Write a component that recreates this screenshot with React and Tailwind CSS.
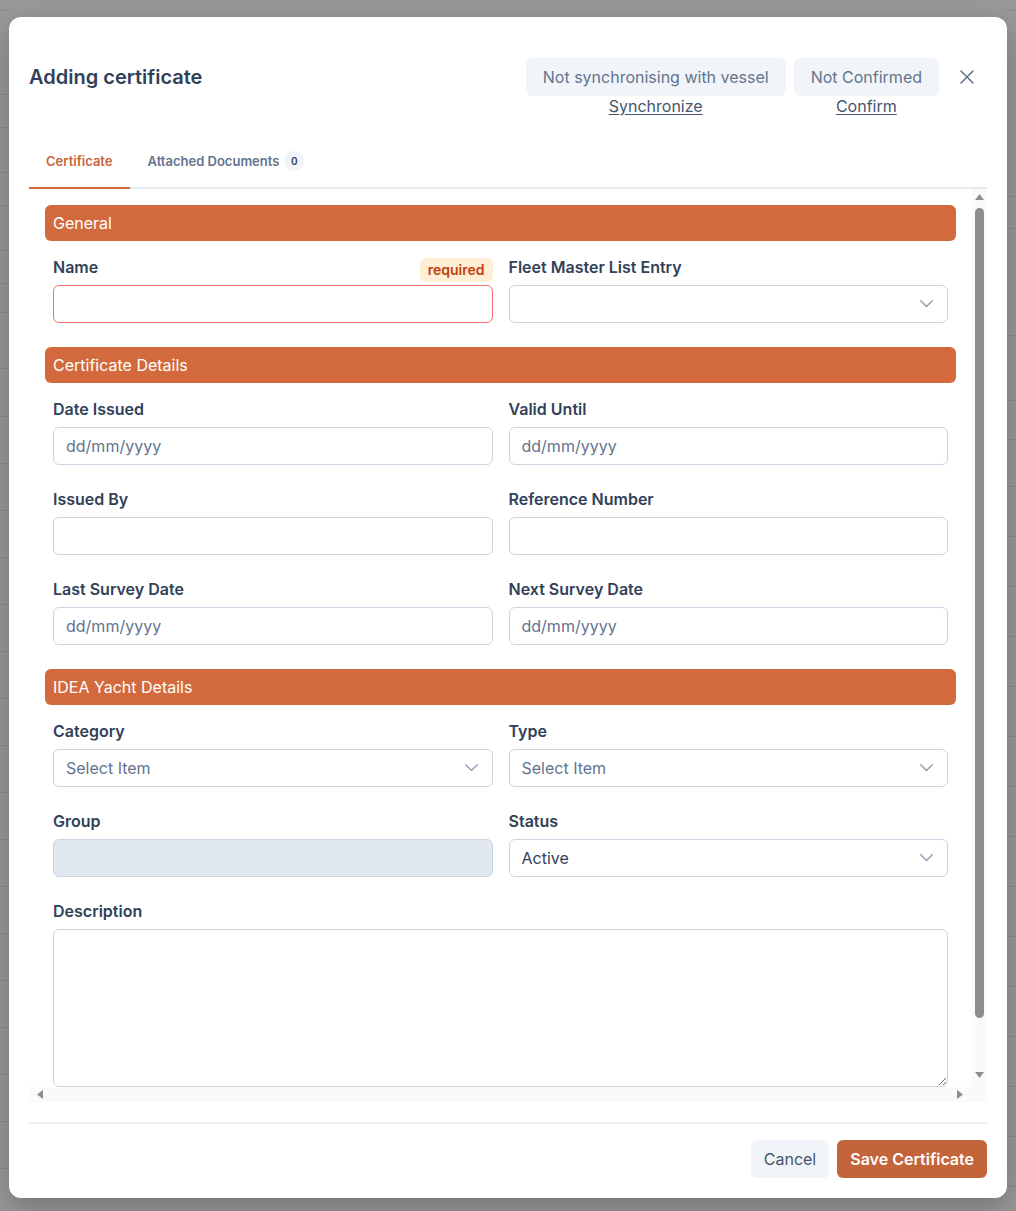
import React from "react";

const Chevron = () => (
  <svg width="13" height="8" viewBox="0 0 13 8" fill="none" className="shrink-0">
    <path d="M0.75 0.75L6.5 6.5L12.25 0.75" stroke="#94a3b8" strokeWidth="1.5" strokeLinecap="round" strokeLinejoin="round" />
  </svg>
);

const Label = ({ children }) => (
  <div className="h-5 mb-2 text-base leading-5 font-semibold text-slate-700">{children}</div>
);

const TextInput = ({ placeholder, error, disabled }) => (
  <input
    type="text"
    placeholder={placeholder}
    disabled={disabled}
    className={
      "block w-full h-[38px] rounded-md border px-3 text-base text-slate-700 placeholder:text-slate-500 outline-none " +
      (error ? "border-[#f87171] bg-white" : disabled ? "border-slate-300 bg-slate-200" : "border-slate-300 bg-white")
    }
  />
);

const Select = ({ value, placeholder }) => (
  <div className="flex h-[38px] w-full items-center justify-between rounded-md border border-slate-300 bg-white pl-3 pr-[14px] text-base">
    <span className={value ? "text-slate-700" : "text-slate-500"}>{value || placeholder || ""}</span>
    <Chevron />
  </div>
);

const Field = ({ label, children }) => (
  <div>
    <Label>{label}</Label>
    {children}
  </div>
);

const SectionHeader = ({ children }) => (
  <div className="flex h-9 items-center rounded-md bg-[#d36a3d] px-2 text-base text-white">{children}</div>
);

const leftLines = [10, 94, 127, 172, 205, 250, 283, 312, 368, 416, 463, 510, 557, 604, 651, 698, 745, 792, 839, 886, 933, 980, 1027, 1074, 1121, 1168];
const rightLines = [10, 196, 228, 335, 400, 439, 486, 536, 586, 636, 686, 736, 786, 836, 886, 936, 986, 1036, 1086, 1136, 1186];

const Strip = ({ lines }) => {
  const rows = [];
  let prev = 0;
  lines.forEach((y, i) => {
    rows.push(<div key={i} className="shrink-0" style={{ height: y - prev }} />);
    rows.push(<div key={"l" + i} className="h-px shrink-0 bg-[#8c8c8c]" />);
    prev = y + 1;
  });
  return <div className="flex w-[9px] flex-col">{rows}</div>;
};

const Tri = ({ dir }) => {
  const paths = {
    up: "M4.5 0L9 6H0Z",
    down: "M0 0H9L4.5 6Z",
    left: "M6 0V9L0 4.5Z",
    right: "M0 0L6 4.5L0 9Z",
  };
  const vertical = dir === "up" || dir === "down";
  return (
    <svg width={vertical ? 9 : 6} height={vertical ? 6 : 9} viewBox={vertical ? "0 0 9 6" : "0 0 6 9"} className="shrink-0">
      <path d={paths[dir]} fill="#8e8e8e" />
    </svg>
  );
};

export default function App() {
  return (
    <div className="relative h-[1211px] w-[1016px] overflow-hidden bg-[#999999] font-['Inter','Noto_Sans',sans-serif]">
      <div className="flex h-full justify-between">
        <Strip lines={leftLines} />
        <Strip lines={rightLines} />
      </div>

      <div className="absolute left-[9px] top-[17px] flex h-[1181px] w-[998px] flex-col rounded-xl bg-white px-5 pt-[41px] pb-5 shadow-[0_10px_30px_rgba(0,0,0,0.25)]">
        {/* Header */}
        <div className="flex items-start justify-between">
          <h2 className="flex h-[38px] items-center text-xl font-semibold text-slate-700">Adding certificate</h2>
          <div className="flex items-start gap-2">
            <div className="flex flex-col items-center">
              <div className="rounded-md bg-slate-100 px-[17px] py-[7px] text-base leading-6 text-slate-500">
                Not synchronising with vessel
              </div>
              <button className="text-base leading-5 text-slate-600 underline underline-offset-2">Synchronize</button>
            </div>
            <div className="flex flex-col items-center">
              <div className="rounded-md bg-slate-100 px-[17px] py-[7px] text-base leading-6 text-slate-500">
                Not Confirmed
              </div>
              <button className="text-base leading-5 text-slate-600 underline underline-offset-2">Confirm</button>
            </div>
            <button className="flex h-[38px] w-10 items-center justify-center">
              <svg width="14" height="14" viewBox="0 0 14 14" fill="none">
                <path d="M1 1L13 13M13 1L1 13" stroke="#64748b" strokeWidth="1.6" strokeLinecap="round" />
              </svg>
            </button>
          </div>
        </div>

        {/* Tabs */}
        <div className="mt-[19px] flex border-b-2 border-[#e5e9f0]">
          <div className="-mb-[2px] border-b-2 border-[#d0683c] px-[17px] py-4 text-[13px] font-semibold leading-5 text-[#c8643b]">
            Certificate
          </div>
          <div className="-mb-[2px] flex items-center gap-[5px] border-b-2 border-transparent px-[18px] py-4 text-[13px] font-semibold leading-5 text-slate-500">
            Attached Documents
            <span className="flex h-5 w-5 items-center justify-center rounded-full bg-slate-100 text-[10px] font-semibold text-slate-700">0</span>
          </div>
        </div>

        {/* Scroll area */}
        <div className="flex h-[913px] shrink-0 flex-col">
          <div className="flex h-[898px]">
            <div className="min-w-0 flex-1 overflow-hidden">
              <div className="px-4 pt-4 pb-[68px]">
                <SectionHeader>General</SectionHeader>
                <div className="mt-4 grid grid-cols-2 gap-x-4 gap-y-6 px-2">
                  <div>
                    <div className="mb-2 flex h-5 items-start justify-between">
                      <span className="text-base font-semibold leading-5 text-slate-700">Name</span>
                      <span className="mt-px flex h-6 items-center rounded-md bg-[#ffedd5] px-2 text-sm font-semibold text-[#c2410c]">required</span>
                    </div>
                    <TextInput error />
                  </div>
                  <Field label="Fleet Master List Entry">
                    <Select />
                  </Field>
                </div>

                <div className="mt-6">
                  <SectionHeader>Certificate Details</SectionHeader>
                </div>
                <div className="mt-4 grid grid-cols-2 gap-x-4 gap-y-6 px-2">
                  <Field label="Date Issued"><TextInput placeholder="dd/mm/yyyy" /></Field>
                  <Field label="Valid Until"><TextInput placeholder="dd/mm/yyyy" /></Field>
                  <Field label="Issued By"><TextInput /></Field>
                  <Field label="Reference Number"><TextInput /></Field>
                  <Field label="Last Survey Date"><TextInput placeholder="dd/mm/yyyy" /></Field>
                  <Field label="Next Survey Date"><TextInput placeholder="dd/mm/yyyy" /></Field>
                </div>

                <div className="mt-6">
                  <SectionHeader>IDEA Yacht Details</SectionHeader>
                </div>
                <div className="mt-4 grid grid-cols-2 gap-x-4 gap-y-6 px-2">
                  <Field label="Category"><Select placeholder="Select Item" /></Field>
                  <Field label="Type"><Select placeholder="Select Item" /></Field>
                  <Field label="Group"><TextInput disabled /></Field>
                  <Field label="Status"><Select value="Active" /></Field>
                  <div className="col-span-2">
                    <Label>Description</Label>
                    <textarea className="block h-[158px] w-full rounded-md border border-slate-300 bg-white px-3 py-2 text-base text-slate-700 outline-none" />
                  </div>
                </div>
              </div>
            </div>
            {/* vertical scrollbar */}
            <div className="flex w-[15px] shrink-0 flex-col items-center bg-[#fafafa] pt-[5px] pb-[9px]">
              <Tri dir="up" />
              <div className="mt-2 h-[810px] w-[9px] rounded-full bg-[#8e8e8e]" />
              <div className="flex-1" />
              <Tri dir="down" />
            </div>
          </div>
          {/* horizontal scrollbar */}
          <div className="flex h-[15px] items-center bg-[#fafafa] pl-2 pr-[24px]">
            <Tri dir="left" />
            <div className="flex-1" />
            <Tri dir="right" />
          </div>
        </div>

        {/* Footer */}
        <div className="mt-5 h-[2px] bg-[#f1f1f1]" />
        <div className="mt-4 flex justify-end gap-2">
          <button className="h-[38px] rounded-md bg-slate-100 px-[13px] text-base text-slate-600">Cancel</button>
          <button className="h-[38px] rounded-md bg-[#c4643a] px-[13px] text-base font-semibold text-white">Save Certificate</button>
        </div>
      </div>
    </div>
  );
}
